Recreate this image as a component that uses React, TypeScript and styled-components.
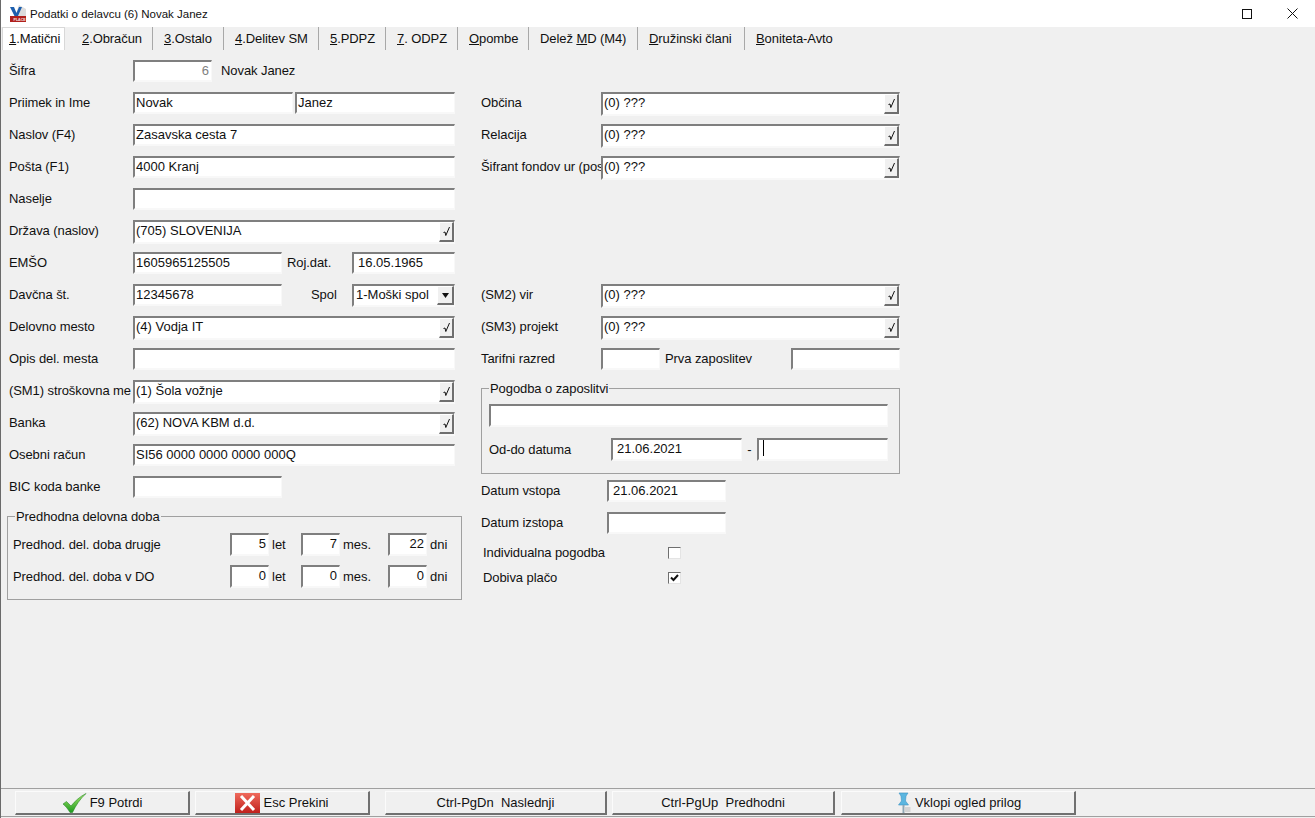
import React from "react";
import styled, { createGlobalStyle } from "styled-components";

const Global = createGlobalStyle`
  html, body { margin: 0; padding: 0; background: #f0f0f0; overflow: hidden; }
  * { box-sizing: border-box; }
`;

const Window = styled.div`
  width: 1315px;
  height: 818px;
  display: flex;
  flex-direction: column;
  background: #f0f0f0;
  border-left: 1px solid #6a6a6a;
  color: #101010;
  font: 13px/22px "Liberation Sans", Arial, sans-serif;
`;

const TitleBar = styled.div`
  height: 27px;
  flex: none;
  background: #fff;
  display: flex;
  align-items: center;
  padding-left: 8px;
  font-size: 11.5px;
  color: #111;
`;
const TitleText = styled.span`
  margin-left: 3px;
  flex: 1;
`;
const WinControls = styled.div`
  display: flex;
  align-items: center;
  gap: 35px;
  padding-right: 17px;
  svg { display: block; }
`;

const TabBar = styled.div`
  height: 23px;
  flex: none;
  display: flex;
  align-items: stretch;
  padding-left: 1px;
  letter-spacing: -0.08px;
`;
const TabItem = styled.div<{ $w: number; $active?: boolean }>`
  width: ${(p) => p.$w}px;
  flex: none;
  display: flex;
  align-items: center;
  padding-left: ${(p) => (p.$active ? 6 : 11)}px;
  white-space: pre;
  background: ${(p) => (p.$active ? "#fff" : "transparent")};
  border-right: 1px solid ${(p) => (p.$active ? "#d8d8d8" : "#a8a8a8")};
  border-top: ${(p) => (p.$active ? "1px solid #d8d8d8" : "none")};
  border-left: ${(p) => (p.$active ? "1px solid #d8d8d8" : "none")};
  margin-right: ${(p) => (p.$active ? 6 : 0)}px;
  u { text-underline-offset: 1px; }
`;
const TabPlain = styled(TabItem)`
  border-right: none;
`;

const Form = styled.div`
  flex: 1;
  display: flex;
  align-items: flex-start;
  padding: 10px 0 0 6px;
`;
const LeftCol = styled.div`
  width: 455px;
  flex: none;
`;
const RightCol = styled.div`
  width: 419px;
  flex: none;
  margin-left: 19px;
`;
const Row = styled.div<{ $h?: number; $pl?: number; $mt?: number }>`
  height: ${(p) => p.$h ?? 32}px;
  margin-top: ${(p) => p.$mt ?? 0}px;
  display: flex;
  align-items: flex-start;
  padding-left: ${(p) => p.$pl ?? 0}px;
`;
const Label = styled.div<{ $w: number; $ml?: number; $lh?: number }>`
  width: ${(p) => p.$w}px;
  flex: none;
  margin-left: ${(p) => p.$ml ?? 0}px;
  white-space: nowrap;
  line-height: ${(p) => p.$lh ?? 21}px;
  letter-spacing: -0.08px;
`;
const Field = styled.div<{ $w?: number; $ml?: number; $h?: number; $right?: boolean; $muted?: boolean; $pl?: number }>`
  width: ${(p) => (p.$w ? `${p.$w}px` : "auto")};
  flex: ${(p) => (p.$w ? "none" : "1")};
  height: ${(p) => p.$h ?? 22}px;
  margin-left: ${(p) => p.$ml ?? 0}px;
  background: #fff;
  border-style: solid;
  border-width: 2px 1px 2px 2px;
  border-color: #7f7f7f #f8f8f8 #f8f8f8 #7f7f7f;
  padding: 0 ${(p) => (p.$right ? 2 : 0)}px 0 ${(p) => p.$pl ?? 1}px;
  line-height: ${(p) => (p.$h === 23 ? 18 : 17)}px;
  text-align: ${(p) => (p.$right ? "right" : "left")};
  color: ${(p) => (p.$muted ? "#808080" : "#101010")};
  white-space: nowrap;
  overflow: hidden;
  position: relative;
`;
const Combo = styled(Field)`
  height: 24px;
  padding-right: 16px;
`;
const Select = styled(Field)`
  height: 23px;
  padding-right: 18px;
`;
const ComboBtn = styled.div<{ $w?: number }>`
  position: absolute;
  right: 0;
  top: 0;
  bottom: 0;
  width: ${(p) => p.$w ?? 15}px;
  background: #f0f0f0;
  border-style: solid;
  border-width: 1px 2px 2px 1px;
  border-color: #fff #6f6f6f #6f6f6f #fff;
  display: flex;
  align-items: center;
  justify-content: center;
`;
const Caret = styled.span`
  display: inline-block;
  width: 1px;
  height: 16px;
  margin-left: 4px;
  background: #000;
  vertical-align: top;
`;
const Group = styled.div<{ $w: number; $h: number; $pt: number; $pl: number; $mt: number }>`
  position: relative;
  width: ${(p) => p.$w}px;
  height: ${(p) => p.$h}px;
  margin-top: ${(p) => p.$mt}px;
  border: 1px solid #a0a0a0;
  padding: ${(p) => p.$pt}px 0 0 ${(p) => p.$pl}px;
`;
const Legend = styled.div`
  position: absolute;
  left: 7px;
  top: -8px;
  background: #f0f0f0;
  line-height: 15px;
  padding: 0 1px;
  letter-spacing: -0.08px;
`;
const Unit = styled.div<{ $w: number }>`
  width: ${(p) => p.$w}px;
  flex: none;
  padding-left: 3px;
  line-height: 23px;
  white-space: nowrap;
`;
const Dash = styled.div`
  width: 15px;
  flex: none;
  text-align: center;
  line-height: 23px;
`;
const CheckRow = styled.div`
  height: 25px;
  display: flex;
  align-items: center;
  padding-left: 2px;
  letter-spacing: -0.08px;
`;
const CheckLabel = styled.div`
  width: 185px;
  flex: none;
`;
const Check = styled.div`
  width: 13px;
  height: 12px;
  background: #fff;
  border-style: solid;
  border-width: 1px;
  border-color: #6f6f6f #e4e4e4 #e4e4e4 #6f6f6f;
  display: flex;
  align-items: center;
  justify-content: center;
  svg { display: block; }
`;

const Footer = styled.div`
  height: 29px;
  flex: none;
  border-top: 1px solid #a0a0a0;
  border-bottom: 1px solid #a0a0a0;
  margin-bottom: 1px;
  padding: 2px 0 0 14px;
  display: flex;
  align-items: flex-start;
`;
const Btn = styled.div<{ $w: number; $ml?: number }>`
  width: ${(p) => p.$w}px;
  height: 24px;
  flex: none;
  margin-left: ${(p) => p.$ml ?? 0}px;
  display: flex;
  align-items: center;
  justify-content: center;
  gap: 3px;
  white-space: pre;
  background: #f0f0f0;
  border-style: solid;
  border-width: 1px 2px 2px 1px;
  border-color: #fbfbfb #707070 #707070 #fbfbfb;
  svg { display: block; flex: none; }
`;

const Tick = () => (
  <svg width="9" height="11" viewBox="0 0 9 11" fill="none">
    <path d="M1.5 6.5 L3 6 L3.8 9.5 L7.5 1" stroke="#111" strokeWidth="1" />
  </svg>
);
const ComboField = ({ w, children }: { w?: number; children: React.ReactNode }) => (
  <Combo $w={w}>
    {children}
    <ComboBtn><Tick /></ComboBtn>
  </Combo>
);
const Under = ({ k, rest, pre }: { k: string; rest: string; pre?: string }) => (
  <span>{pre}<u>{k}</u>{rest}</span>
);

const AppIcon = () => (
  <svg width="18" height="19" viewBox="0 0 18 19">
    <path d="M10 1 L17 5 L17 12 L6 12 Z" fill="#dcdcdc" />
    <path d="M1 3 L5 3 L7.5 9 L10 3 L13 3 L9 12 L5.5 12 Z" fill="#1d5fae" />
    <rect x="1" y="12" width="16" height="6" fill="#b0201c" />
    <text x="4.5" y="16.6" fontSize="3.6" fontWeight="700" fill="#f6e6e6" fontFamily="Liberation Sans, sans-serif">PLACE</text>
  </svg>
);
const OkIcon = () => (
  <svg width="25" height="20" viewBox="0 0 25 20">
    <defs>
      <linearGradient id="ok" x1="0" y1="0" x2="0" y2="1">
        <stop offset="0" stopColor="#a6e86a" />
        <stop offset="1" stopColor="#1f9a1f" />
      </linearGradient>
    </defs>
    <path d="M1 11 L4.5 8.5 L9 13 C13 8 18 3.5 24 0.5 C18 6 14 12 10.5 19.5 L8 19.5 C6 16 3.5 13 1 11 Z" fill="url(#ok)" stroke="#2c8a2c" strokeWidth="0.6" />
  </svg>
);
const CancelIcon = () => (
  <svg width="25" height="20" viewBox="0 0 25 20">
    <defs>
      <linearGradient id="no" x1="0" y1="0" x2="0" y2="1">
        <stop offset="0" stopColor="#ef6a5c" />
        <stop offset="1" stopColor="#c0201c" />
      </linearGradient>
    </defs>
    <rect width="25" height="20" fill="url(#no)" />
    <path d="M6 3 L19 17 M19 3 L6 17" stroke="#fff" strokeWidth="3" />
  </svg>
);
const PinIcon = () => (
  <svg width="17" height="22" viewBox="0 0 17 22">
    <path d="M4 1 L13 1 L11 4 L10.5 9 L13.5 13 L3.5 13 L6.5 9 L6 4 Z" fill="#5bb6e0" stroke="#3c93c4" strokeWidth="0.6" />
    <rect x="7.5" y="13" width="2" height="8" fill="#8fa7b5" />
    <rect x="9.5" y="15" width="6" height="5" fill="#d4d4d4" />
  </svg>
);

export default function App() {
  return (
    <Window>
      <Global />
      <TitleBar>
        <AppIcon />
        <TitleText>Podatki o delavcu (6) Novak Janez</TitleText>
        <WinControls>
          <svg width="10" height="10" viewBox="0 0 10 10"><rect x="0.5" y="0.5" width="9" height="9" fill="none" stroke="#111" /></svg>
          <svg width="11" height="11" viewBox="0 0 11 11"><path d="M0.5 0.5 L10.5 10.5 M10.5 0.5 L0.5 10.5" stroke="#111" /></svg>
        </WinControls>
      </TitleBar>

      <TabBar>
        <TabItem $w={63} $active><Under k="1" rest=".Matični" /></TabItem>
        <TabItem $w={82}><Under k="2" rest=".Obračun" /></TabItem>
        <TabItem $w={71}><Under k="3" rest=".Ostalo" /></TabItem>
        <TabItem $w={95}><Under k="4" rest=".Delitev SM" /></TabItem>
        <TabItem $w={67}><Under k="5" rest=".PDPZ" /></TabItem>
        <TabItem $w={72}><Under k="7" rest=". ODPZ" /></TabItem>
        <TabItem $w={71}><Under k="O" rest="pombe" /></TabItem>
        <TabItem $w={109}><Under pre="Delež " k="M" rest="D (M4)" /></TabItem>
        <TabItem $w={107}><Under k="D" rest="ružinski člani" /></TabItem>
        <TabPlain $w={100}><Under k="B" rest="oniteta-Avto" /></TabPlain>
      </TabBar>

      <Form>
        <LeftCol>
          <Row $pl={2}>
            <Label $w={124}>Šifra</Label>
            <Field $w={79} $right $muted>6</Field>
            <Label $w={100} $ml={9}>Novak Janez</Label>
          </Row>
          <Row $pl={2}>
            <Label $w={124}>Priimek in Ime</Label>
            <Field $w={160}>Novak</Field>
            <Field $w={160} $ml={2}>Janez</Field>
          </Row>
          <Row $pl={2}><Label $w={124}>Naslov (F4)</Label><Field $w={322}>Zasavska cesta 7</Field></Row>
          <Row $pl={2}><Label $w={124}>Pošta (F1)</Label><Field $w={322}>4000 Kranj</Field></Row>
          <Row $pl={2}><Label $w={124}>Naselje</Label><Field $w={322} /></Row>
          <Row $pl={2}><Label $w={124}>Država (naslov)</Label><ComboField w={322}>(705) SLOVENIJA</ComboField></Row>
          <Row $pl={2}>
            <Label $w={124}>EMŠO</Label>
            <Field $w={149}>1605965125505</Field>
            <Label $w={65} $ml={5}>Roj.dat.</Label>
            <Field $w={103} $pl={4}>16.05.1965</Field>
          </Row>
          <Row $pl={2}>
            <Label $w={124}>Davčna št.</Label>
            <Field $w={149}>12345678</Field>
            <Label $w={41} $ml={29}>Spol</Label>
            <Select $w={103} $pl={2}>
              1-Moški spol
              <ComboBtn $w={17}>
                <svg width="7" height="5" viewBox="0 0 7 5"><path d="M0 0 H7 L3.5 5 Z" fill="#111" /></svg>
              </ComboBtn>
            </Select>
          </Row>
          <Row $pl={2}><Label $w={124}>Delovno mesto</Label><ComboField w={322}>(4) Vodja IT</ComboField></Row>
          <Row $pl={2}><Label $w={124}>Opis del. mesta</Label><Field $w={322} /></Row>
          <Row $pl={2}><Label $w={124}>(SM1) stroškovna me</Label><ComboField w={322}>(1) Šola vožnje</ComboField></Row>
          <Row $pl={2}><Label $w={124}>Banka</Label><ComboField w={322}>(62) NOVA KBM d.d.</ComboField></Row>
          <Row $pl={2}><Label $w={124}>Osebni račun</Label><Field $w={322}>SI56 0000 0000 0000 000Q</Field></Row>
          <Row $pl={2}><Label $w={124}>BIC koda banke</Label><Field $w={149} /></Row>
          <Group $w={455} $h={84} $mt={8} $pt={16} $pl={5}>
            <Legend>Predhodna delovna doba</Legend>
            <Row>
              <Label $w={217} $lh={23}>Predhod. del. doba drugje</Label>
              <Field $w={39} $h={23} $right>5</Field><Unit $w={32}>let</Unit>
              <Field $w={39} $h={23} $right>7</Field><Unit $w={48}>mes.</Unit>
              <Field $w={39} $h={23} $right>22</Field><Unit $w={30}>dni</Unit>
            </Row>
            <Row>
              <Label $w={217} $lh={23}>Predhod. del. doba v DO</Label>
              <Field $w={39} $h={23} $right>0</Field><Unit $w={32}>let</Unit>
              <Field $w={39} $h={23} $right>0</Field><Unit $w={48}>mes.</Unit>
              <Field $w={39} $h={23} $right>0</Field><Unit $w={30}>dni</Unit>
            </Row>
          </Group>
        </LeftCol>

        <RightCol>
          <Row />
          <Row><Label $w={120}>Občina</Label><ComboField w={299}>(0) ???</ComboField></Row>
          <Row><Label $w={120}>Relacija</Label><ComboField w={299}>(0) ???</ComboField></Row>
          <Row><Label $w={120}>Šifrant fondov ur (pos</Label><ComboField w={299}>(0) ???</ComboField></Row>
          <Row />
          <Row />
          <Row />
          <Row><Label $w={120}>(SM2) vir</Label><ComboField w={299}>(0) ???</ComboField></Row>
          <Row><Label $w={120}>(SM3) projekt</Label><ComboField w={299}>(0) ???</ComboField></Row>
          <Row>
            <Label $w={120}>Tarifni razred</Label>
            <Field $w={59} />
            <Label $w={126} $ml={5}>Prva zaposlitev</Label>
            <Field $w={109} />
          </Row>
          <Group $w={419} $h={86} $mt={8} $pt={15} $pl={7}>
            <Legend>Pogodba o zaposlitvi</Legend>
            <Row $h={34}><Field $w={399} $h={23} /></Row>
            <Row>
              <Label $w={122} $lh={23}>Od-do datuma</Label>
              <Field $w={131} $h={23} $pl={4}>21.06.2021</Field>
              <Dash>-</Dash>
              <Field $w={131} $h={23} $pl={0}><Caret /></Field>
            </Row>
          </Group>
          <Row $mt={6}>
            <Label $w={126}>Datum vstopa</Label>
            <Field $w={119} $pl={4}>21.06.2021</Field>
          </Row>
          <Row $h={28}>
            <Label $w={126}>Datum izstopa</Label>
            <Field $w={119} />
          </Row>
          <CheckRow><CheckLabel>Individualna pogodba</CheckLabel><Check /></CheckRow>
          <CheckRow>
            <CheckLabel>Dobiva plačo</CheckLabel>
            <Check>
              <svg width="9" height="8" viewBox="0 0 9 8"><path d="M1 3.5 L3.5 6 L8 1" fill="none" stroke="#111" strokeWidth="2" /></svg>
            </Check>
          </CheckRow>
        </RightCol>
      </Form>

      <Footer>
        <Btn $w={175}><OkIcon />F9 Potrdi</Btn>
        <Btn $w={175} $ml={5}><CancelIcon />Esc Prekini</Btn>
        <Btn $w={222} $ml={15}>Ctrl-PgDn  Naslednji</Btn>
        <Btn $w={223} $ml={5}>Ctrl-PgUp  Predhodni</Btn>
        <Btn $w={235} $ml={6}><PinIcon />Vklopi ogled prilog</Btn>
      </Footer>
    </Window>
  );
}
